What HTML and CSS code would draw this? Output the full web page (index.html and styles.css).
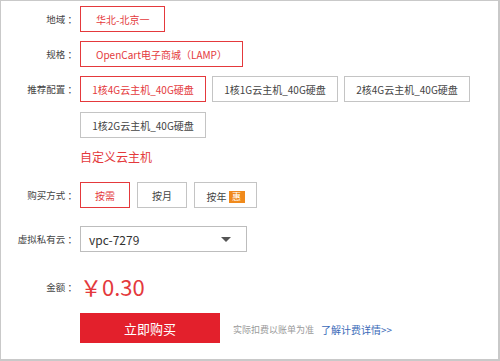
FILE: index.html
```html
<!DOCTYPE html>
<html lang="zh-CN">
<head>
    <meta charset="UTF-8">
    <title>购买云主机</title>
    <link rel="stylesheet" href="styles.css">
</head>
<body>
    <div class="order-panel">
        <div class="order-row">
            <div class="order-label">地域 ：</div>
            <div class="order-field">
                <span class="opt-box selected pad">华北-北京一</span>
            </div>
        </div>
        <div class="order-row">
            <div class="order-label">规格 ：</div>
            <div class="order-field">
                <span class="opt-box selected pad">OpenCart电子商城（LAMP）</span>
            </div>
        </div>
        <div class="order-row config-row">
            <div class="order-label">推荐配置 ：</div>
            <div class="order-field config-list">
                <span class="opt-box selected config">1核4G云主机_40G硬盘</span>
                <span class="opt-box config">1核1G云主机_40G硬盘</span>
                <span class="opt-box config">2核4G云主机_40G硬盘</span>
                <span class="opt-box config">1核2G云主机_40G硬盘</span>
            </div>
        </div>
        <div class="order-row">
            <div class="order-label"></div>
            <div class="order-field">
                <a class="custom-link" href="#">自定义云主机</a>
            </div>
        </div>
        <div class="order-row pay-row">
            <div class="order-label">购买方式 ：</div>
            <div class="order-field pay-list">
                <span class="opt-box selected pay">按需</span>
                <span class="opt-box pay">按月</span>
                <span class="opt-box pay year">按年<i class="badge">惠</i></span>
            </div>
        </div>
        <div class="order-row vpc-row">
            <div class="order-label">虚拟私有云 ：</div>
            <div class="order-field">
                <div class="select-box">
                    <span>vpc-7279</span>
                    <span class="caret"></span>
                </div>
            </div>
        </div>
        <div class="order-row price-row">
            <div class="order-label">金额 ：</div>
            <div class="order-field">
                <span class="price">￥0.30</span>
            </div>
        </div>
        <div class="order-row buy-row">
            <div class="order-label"></div>
            <div class="order-field buy-line">
                <button class="buy-button">立即购买</button>
                <span class="note">实际扣费以账单为准</span>
                <a class="detail-link" href="#">了解计费详情&gt;&gt;</a>
            </div>
        </div>
    </div>
</body>
</html>
```

FILE: styles.css
```css
html, body {
    margin: 0;
    padding: 0;
    background-color: #fff;
}
body {
    font-family: "Noto Sans CJK SC", "Noto Sans", sans-serif;
    color: #333;
}
.order-panel {
    box-sizing: border-box;
    width: 500px;
    height: 361px;
    border: 1px solid #c9c9c9;
    border-right-width: 2px;
    border-bottom-width: 2px;
    padding-top: 5px;
}
.order-row {
    display: grid;
    grid-template-columns: 76px 1fr;
    column-gap: 3px;
    align-items: center;
    margin-bottom: 9px;
}
.order-label {
    font-size: 9.5px;
    text-align: right;
    color: #444;
}
.config-row {
    align-items: start;
}
.config-row .order-label {
    line-height: 26px;
}
.order-field {
    display: flex;
    align-items: center;
}
.opt-box {
    box-sizing: border-box;
    height: 26px;
    display: inline-flex;
    align-items: center;
    justify-content: center;
    border: 1px solid #c4c4c4;
    background-color: #fff;
    font-size: 10px;
    color: #444;
}
.opt-box.selected {
    border-color: #e4393c;
    color: #e4393c;
}
.opt-box.pad {
    padding: 0 15px;
}
.config-list {
    flex-wrap: wrap;
    gap: 10px 6px;
    width: 400px;
}
.opt-box.config {
    width: 126px;
}
.custom-link {
    font-size: 12px;
    line-height: 20px;
    color: #e4393c;
    text-decoration: none;
}
.pay-row {
    margin-top: 15px;
    margin-bottom: 18px;
}
.pay-list {
    gap: 7px;
}
.opt-box.pay {
    width: 50px;
}
.opt-box.year {
    width: 63px;
    padding-top: 3px;
}
.badge {
    display: inline-block;
    width: 16px;
    height: 12px;
    margin-left: 2px;
    background-color: #f08a1c;
    color: #fff;
    font-style: normal;
    font-size: 9px;
    line-height: 12px;
    text-align: center;
}
.select-box {
    box-sizing: border-box;
    width: 167px;
    height: 26px;
    display: flex;
    align-items: center;
    justify-content: space-between;
    padding: 0 15px 0 8px;
    border: 1px solid #bdbdbd;
    font-size: 12px;
    color: #333;
}
.caret {
    width: 0;
    height: 0;
    border-left: 5px solid transparent;
    border-right: 5px solid transparent;
    border-top: 5px solid #555;
}
.vpc-row {
    margin-bottom: 19px;
}
.price {
    font-size: 22px;
    line-height: 30px;
    color: #e4393c;
}
.price-row {
    margin-bottom: 12px;
}
.price-row .order-label {
    padding-top: 2px;
}
.buy-button {
    width: 140px;
    height: 30px;
    border: none;
    background-color: #e3202c;
    color: #fff;
    font-family: inherit;
    font-size: 13px;
    cursor: pointer;
    margin-right: 13px;
}
.note {
    font-size: 9px;
    color: #9a9a9a;
    margin-right: 7px;
    padding-top: 2px;
}
.detail-link {
    font-size: 10px;
    color: #3a6ab8;
    text-decoration: none;
    padding-top: 2px;
}
```
